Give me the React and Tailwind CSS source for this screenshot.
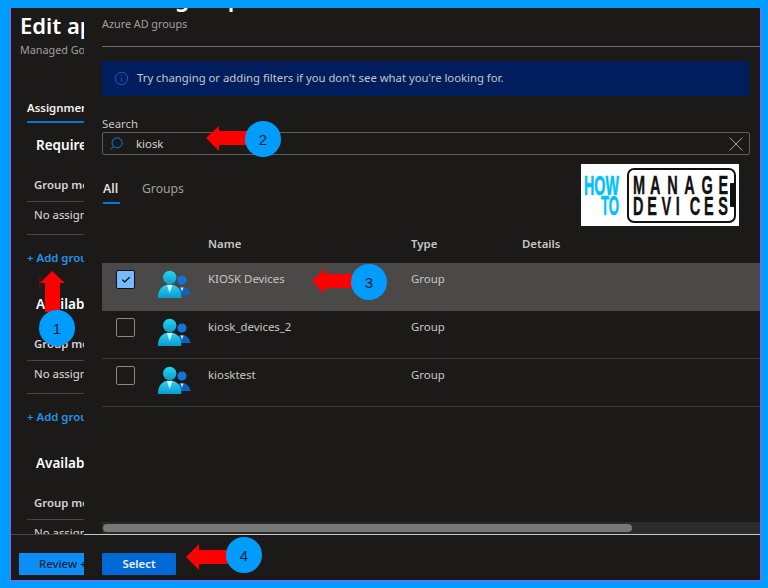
import React from "react";
import { Search, X, Check, Info } from "lucide-react";

const groups = [
  { name: "KIOSK Devices", picked: true },
  { name: "kiosk_devices_2", picked: false },
  { name: "kiosktest", picked: false },
];

const GroupIcon = () => (
  <svg width="34" height="30" viewBox="0 0 34 30">
    <defs>
      <linearGradient id="front" x1="0" y1="0" x2="0" y2="1">
        <stop offset="0" stopColor="#27d4fb" />
        <stop offset="1" stopColor="#0b9cc9" />
      </linearGradient>
    </defs>
    <circle cx="25" cy="11" r="4.6" fill="#1273d8" />
    <path d="M19 26c0-5 2-8 6-8s8 3 8.500 8z" fill="#0f62c4" />
    <path d="M23.500 18.500h3l-1.500 4z" fill="#d8f0ff" />
    <circle cx="12.700" cy="8.500" r="6.700" fill="url(#front)" />
    <path d="M1 29c-.3-8 4-13.500 11.700-13.500S24.700 21 24.400 29z" fill="url(#front)" />
    <path d="M10 16h5.400l-2.700 8z" fill="#e4f8ff" />
  </svg>
);

// left blade, mostly hidden behind the dialog
const AssignSection = ({ title, titleClass, cut }) => (
  <div className={titleClass}>
    <div className="pl-[9px] text-[13.500px] font-semibold leading-[20px] text-white">{title}</div>
    <div className="mt-[21px] border-b border-[#484644] pb-[7px] pl-[7px] text-[11.400px] font-semibold leading-[18px] text-[#d6d4d2]">
      Group mode
    </div>
    <div className={cut ? "pl-[7px] pt-[4px] text-[11.400px] leading-[18px] text-[#e1dfdd]" : "border-b border-[#484644] pb-[10px] pl-[7px] pt-[4px] text-[11.400px] leading-[18px] text-[#e1dfdd]"}>
      No assignments
    </div>
    {!cut && (
      <div className="mt-[14px] text-[11.400px] font-semibold leading-[18px] text-[#2492ea]">+ Add group</div>
    )}
  </div>
);

const App = () => {
  return (
    <div className="relative h-[588px] w-[768px] overflow-hidden bg-[#009dff] pb-[7px] pl-[10px] pr-[7px] pt-2 font-['Noto_Sans',sans-serif]">
      <div className="flex h-full whitespace-nowrap border-b border-l border-r border-[#a855e8] bg-[#1b1a19]">
        {/* blade behind */}
        <div className="flex w-[73px] shrink-0 flex-col overflow-hidden">
          <div className="h-[526px] overflow-hidden px-0">
            <div className="pl-[9px] pt-[2px] text-[22px] font-semibold leading-[30px] text-white">Edit application</div>
            <div className="pl-[9px] pt-[2px] text-[10.800px] leading-[16px] text-[#a19f9d]">Managed Google Play</div>
            <div className="ml-4 mt-[41px] border-b-2 border-[#0078d4] pb-[4px] text-[11.400px] font-semibold leading-[18px] text-[#f3f2f1]">
              Assignments
            </div>
            <AssignSection title="Required" titleClass="ml-4 mt-[12px]" />
            <AssignSection title="Available for enrolled devices" titleClass="ml-4 mt-[27px]" />
            <AssignSection title="Available" titleClass="ml-4 mt-[27px]" cut />
          </div>
          <div className="flex-1 border-t border-[#484644] pl-2 pt-[18px]">
            <div className="flex h-[22px] w-[90px] items-center rounded-[1px] bg-[#0b8df5] pl-5 text-[11.400px] font-medium text-[#11253a]">
              Review + save
            </div>
          </div>
        </div>

        {/* dialog */}
        <div className="flex min-w-0 flex-1 flex-col bg-[#1b1a19]">
          <div className="h-[526px] overflow-hidden">
            <div className="h-[38px] overflow-hidden pl-[18px]">
              <div className="-mt-[27px] text-[23px] font-semibold leading-[32px] text-white">Select groups</div>
              <div className="mt-[3px] text-[10.800px] leading-[16px] text-[#a19f9d]">Azure AD groups</div>
            </div>
            <div className="ml-[18px] h-px bg-[#6e6c6a]"></div>

            <div className="ml-[18px] mr-[11px] mt-[14px] flex h-[35px] items-center bg-[#001e5e] pl-3 text-[11.300px] text-[#c8c6c4]">
              <Info size={15} strokeWidth={1.3} className="text-[#0f6cd0]" />
              <span className="ml-2">Try changing or adding filters if you don't see what you're looking for.</span>
            </div>

            <div className="ml-[18px] mr-[10px] mt-[20px] text-[11.400px] leading-[16px] text-[#c8c6c4]">Search</div>
            <div className="ml-[18px] mr-[10px] flex h-[23px] items-center rounded-[2px] border border-[#605e5c] pl-[6px] pr-[1px] text-[11.400px] text-[#d6d4d2]">
              <Search size={15} strokeWidth={1.8} className="-scale-x-100 text-[#1068b8]" />
              <span className="ml-[12px]">kiosk</span>
              <X size={24} strokeWidth={0.8} className="-my-1 ml-auto text-[#c8c6c4]" />
            </div>

            <div className="relative ml-[18px] mt-[24px] flex h-[24px] text-[12.200px] leading-[20px]">
              <div className="h-[24px] w-[40px] pl-px font-semibold text-[#e1dfdd]">
                All
                <div className="mt-[3px] h-[2px] w-[17px] bg-[#0078d4]"></div>
              </div>
              <div className="text-[#a19f9d]">Groups</div>
              <svg className="absolute left-[479px] -top-[15px] bg-white" width="158" height="62" viewBox="0 0 158 62">
                <g fontFamily="'Liberation Sans',sans-serif" fontWeight="700">
                  <text x="3" y="31" fontSize="27" fill="#00c0ff" stroke="#00c0ff" strokeWidth="0.6" textLength="35" lengthAdjust="spacingAndGlyphs">HOW</text>
                  <text x="20" y="51" fontSize="27" fill="#00c0ff" stroke="#00c0ff" strokeWidth="0.6" textLength="18" lengthAdjust="spacingAndGlyphs">TO</text>
                  <g fontSize="25" fill="#111" stroke="#111" strokeWidth="0.4">
                    <text transform="translate(52 30) scale(.58 1)" x="0 29.500 59 88.500 118 147.500" y="0">MANAGE</text>
                    <text transform="translate(52 51) scale(.58 1)" x="0 24.500 49 73.500 98 122.500 147" y="0">DEVICES</text>
                  </g>
                </g>
                <rect x="47" y="5" width="107" height="53" rx="6" fill="none" stroke="#111" strokeWidth="2" />
                <rect x="149" y="19" width="5" height="24" rx="1" fill="#111" />
              </svg>
            </div>

            <div className="ml-[18px] mt-[32px] flex h-[28px] text-[11.400px] font-semibold leading-[18px] text-[#c8c6c4]">
              <div className="w-[106px]"></div>
              <div className="w-[203px]">Name</div>
              <div className="w-[111px]">Type</div>
              <div>Details</div>
            </div>

            {groups.map((g) => (
              <div
                key={g.name}
                className={
                  g.picked
                    ? "ml-[18px] flex h-[48px] bg-[#4a4948] pt-[7px] text-[11.400px] leading-[16px] text-[#c8c6c4]"
                    : "ml-[18px] flex h-[48px] border-b border-[#3b3a39] pt-[7px] text-[11.400px] leading-[16px] text-[#c8c6c4]"
                }
              >
                <div className="w-[55px] pl-[14px]">
                  {g.picked ? (
                    <div className="flex h-[19px] w-[19px] items-center justify-center rounded-[2px] border border-[#111] bg-[#74bcff]">
                      <Check size={10} strokeWidth={3.5} className="text-[#1b1a19]" />
                    </div>
                  ) : (
                    <div className="h-[19px] w-[19px] rounded-[2px] border border-[#8a8886]"></div>
                  )}
                </div>
                <div className="-mt-px w-[51px]">
                  <GroupIcon />
                </div>
                <div className="w-[203px] pt-px">{g.name}</div>
                <div className="pt-px">Group</div>
              </div>
            ))}

            <div className="ml-[18px] mt-[115px] flex h-[12px] items-center bg-[#2b2b2b]">
              <div className="ml-px h-[8px] w-[529px] rounded-[4px] bg-[#787878]"></div>
            </div>
          </div>
          <div className="flex-1 border-t border-[#c8c6c4] pl-[18px] pt-[18px]">
            <div className="flex h-[22px] w-[74px] items-center justify-center rounded-[1px] bg-[#0069d6] text-[11.400px] font-semibold text-[#f3f2f1]">
              Select
            </div>
          </div>
        </div>
      </div>

      {/* numbered call-outs drawn over the screenshot */}
      <svg className="pointer-events-none absolute left-0 top-0" width="768" height="588" viewBox="0 0 768 588">
        <g fill="#ff0000">
          <path d="M52 271 65 283H60V312H45V283H40z" />
          <path d="M206 138 219 126V131H250V145H219V151z" />
          <path d="M312 281 325 268V274H356V288H325V294z" />
          <path d="M186 557 199 544V550H230V564H199V570z" />
        </g>
        <path d="M40 277V290" stroke="#7a1010" strokeWidth="1" />
        <g fill="#009dff">
          <circle cx="57" cy="328" r="18" />
          <circle cx="263" cy="139" r="18" />
          <circle cx="369" cy="282" r="18" />
          <circle cx="244" cy="555" r="18" />
        </g>
        <g fontFamily="'Liberation Sans',sans-serif" fontSize="15" fill="#0c2238" textAnchor="middle">
          <text x="57" y="334">1</text>
          <text x="263" y="145">2</text>
          <text x="369" y="288">3</text>
          <text x="244" y="561">4</text>
        </g>
      </svg>
    </div>
  );
};

export default App;
